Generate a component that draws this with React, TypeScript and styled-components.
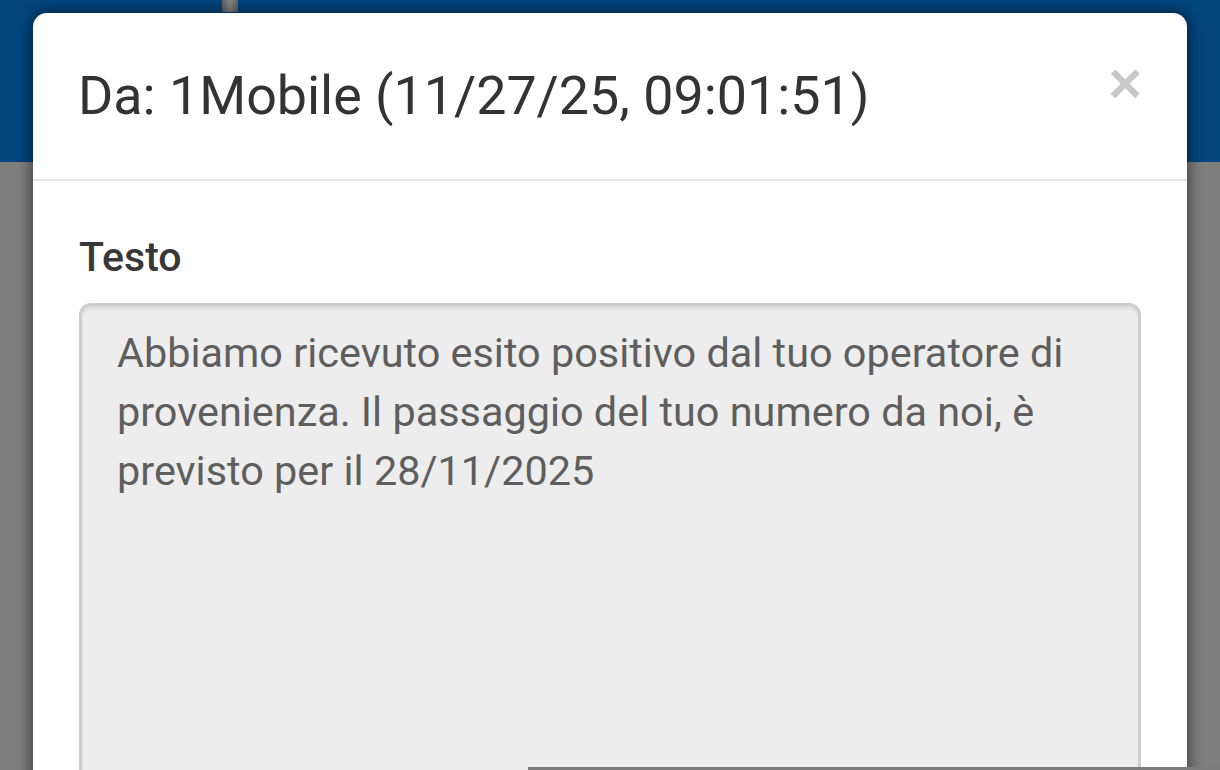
import styled, { createGlobalStyle } from "styled-components";

const GlobalStyle = createGlobalStyle`
  html, body {
    margin: 0;
    padding: 0;
    background: #7f7f7f;
  }
  body {
    font-family: Roboto, "Noto Sans", "Liberation Sans", sans-serif;
  }
`;

const message =
  "Abbiamo ricevuto esito positivo dal tuo operatore di provenienza. Il passaggio del tuo numero da noi, è previsto per il 28/11/2025";

export default function App() {
  return (
    <Page>
      <GlobalStyle />
      <Navbar>
        <NavTab />
      </Navbar>
      <Backdrop />

      <Modal>
        <ModalHeader>
          <ModalTitle>Da: 1Mobile (11/27/25, 09:01:51)</ModalTitle>
          <CloseButton aria-label="Chiudi">×</CloseButton>
        </ModalHeader>
        <ModalBody>
          <Label>Testo</Label>
          <TextArea readOnly value={message} />
        </ModalBody>
      </Modal>

      <BottomBar />
    </Page>
  );
}

const Page = styled.div`
  position: relative;
  width: 1220px;
  height: 770px;
  overflow: hidden;
  display: flex;
  flex-direction: column;
  background: #7f7f7f;
`;

const Navbar = styled.header`
  height: 162px;
  flex-shrink: 0;
  background: #02467f;
  display: flex;
  padding-left: 222px;
`;

const NavTab = styled.div`
  width: 16px;
  height: 12px;
  background: linear-gradient(90deg, #5a6470, #8d8a84 50%, #5a6470);
`;

const Backdrop = styled.div`
  flex: 1;
  background: #7f7f7f;
`;

const Modal = styled.div`
  position: absolute;
  left: 33px;
  top: 13px;
  width: 1154px;
  height: 800px;
  background: #fff;
  border-radius: 14px;
  box-shadow: 0 0 14px 3px rgba(0, 0, 0, 0.45);
  display: flex;
  flex-direction: column;
`;

const ModalHeader = styled.div`
  display: flex;
  align-items: flex-start;
  justify-content: space-between;
  padding: 43px 45px 43px 45px;
  border-bottom: 2px solid #e5e5e5;
`;

const ModalTitle = styled.h4`
  margin: 0;
  font-size: 53.8px;
  font-weight: 400;
  line-height: 80px;
  color: #333;
`;

const CloseButton = styled.button`
  border: 0;
  background: none;
  padding: 0;
  margin-top: -12px;
  font-family: "Liberation Sans", Arial, sans-serif;
  font-size: 58px;
  font-weight: 700;
  line-height: 78px;
  color: #c8c8c8;
  cursor: pointer;
`;

const ModalBody = styled.div`
  display: flex;
  flex-direction: column;
  padding: 47px 46px 0 46px;
`;

const Label = styled.label`
  font-size: 41px;
  font-weight: 500;
  line-height: 58px;
  color: #383838;
  margin-bottom: 17px;
`;

const TextArea = styled.textarea`
  width: 100%;
  height: 520px;
  box-sizing: border-box;
  resize: none;
  padding: 18px 35px;
  border: 3px solid #cdcdcd;
  border-radius: 12px;
  background: #ededed;
  box-shadow: inset 0 3px 3px rgba(0, 0, 0, 0.075);
  font-family: Roboto, "Noto Sans", "Liberation Sans", sans-serif;
  font-size: 41.4px;
  font-weight: 400;
  line-height: 59px;
  color: #5e5e5e;
  outline: none;
`;

const BottomBar = styled.div`
  position: absolute;
  left: 528px;
  right: 0;
  bottom: 0;
  height: 3px;
  background: #7a7a7a;
`;
